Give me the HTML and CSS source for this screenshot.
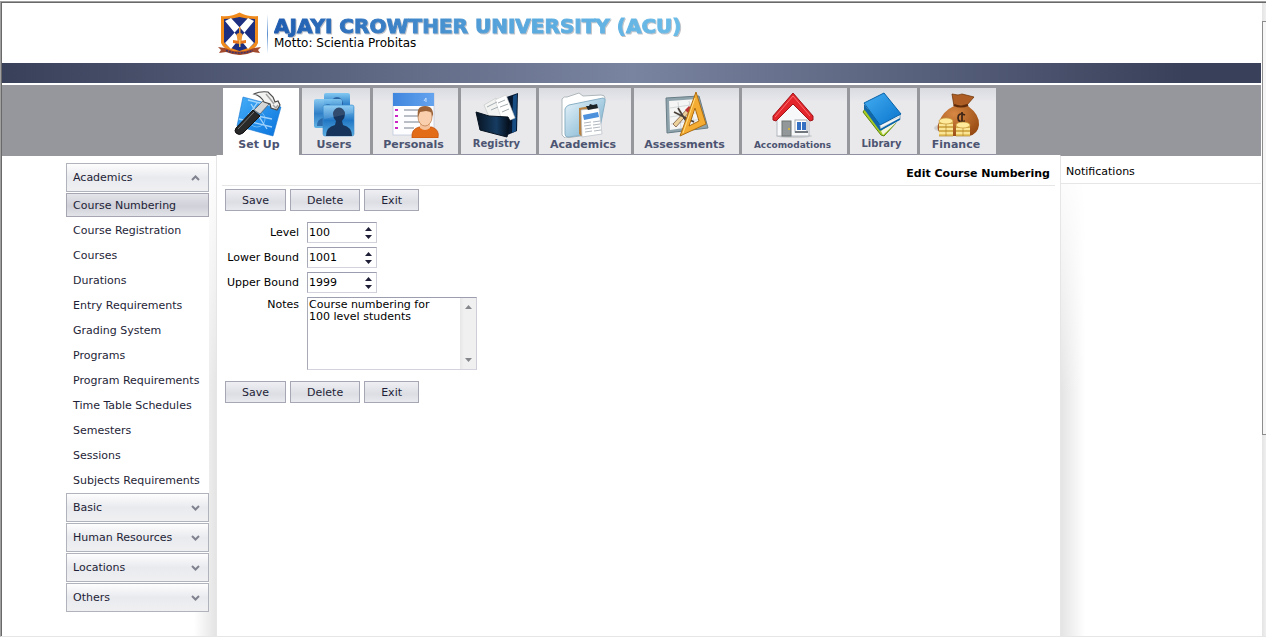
FILE: index.html
```html
<!DOCTYPE html>
<html lang="en">
<head>
<meta charset="utf-8">
<title>Edit Course Numbering</title>
<link rel="stylesheet" href="styles.css">
</head>
<body>
<div class="frame">
<div class="page">
  <header class="brand">
    <svg class="crest" viewBox="0 0 45 44" aria-hidden="true">
      <path d="M4 4 Q15 5 22.500 0.500 Q30 5 41 4 V31 Q39 38 22.500 43 Q6 38 4 31Z" fill="#f08a1c"/>
      <path d="M7 7 Q16 7 22.500 5 Q29 7 38 7 V30 Q36 35 22.500 39 Q9 35 7 30Z" fill="#1c2f80"/>
      <path d="M8 9 L14 6 L37 31 L31 37Z M37 9 L31 6 L8 31 L14 37Z" fill="#fff"/>
      <path d="M22 15h1.500v6l2 1-1 7h-4l-1-7 2.500-1Z" fill="#f19a35"/>
      <path d="M16 28l6.500 1 6.500-1v3l-6.500 1-6.500-1Z" fill="#e8751a"/>
      <path d="M22 28v7h1.500v-7Z" fill="#f7c25a"/>
      <path d="M1 35l7 1q14 7 29 0l7-1-3 3 2 3-7-1q-13 6-27 0l-7 1 2-3Z" fill="#a34a2c"/>
      <path d="M9 38.500q13 5 27 0" fill="none" stroke="#3d3468" stroke-width="1.500" stroke-dasharray="2 1"/>
    </svg>
    <span class="rule"></span>
    <div>
      <div class="name">AJAYI CROWTHER UNIVERSITY (ACU)</div>
      <div class="motto">Motto: Scientia Probitas</div>
    </div>
  </header>
  <div class="band"></div>
  <nav class="tabs" aria-label="Modules">
    <a href="#" class="tab setup active">
      <svg viewBox="0 0 60 48" aria-hidden="true">
        <defs><linearGradient id="bl" x1="0" y1="0" x2="1" y2="1"><stop offset="0" stop-color="#45aef8"/><stop offset="1" stop-color="#0872dc"/></linearGradient></defs>
        <path d="M14 7 L52 17 L44 46 L8 36Z" fill="url(#bl)" stroke="#1577d2" stroke-width=".6"/>
        <path d="M14 34L28 13M22 14l16 25M10 29l33 8M19 24l24 5M19 10l28 7" stroke="#bfe4ff" stroke-width="1.300" fill="none" opacity=".8"/>
        <circle cx="28" cy="29" r="8" fill="none" stroke="#9bd3fc" opacity=".6"/>
        <path d="M7 38 L24 20 L31 26 L14 43 Q10 46 7 43 Q5 41 7 38Z" fill="#292929" stroke="#111"/>
        <path d="M9 39L25 22" stroke="#777"/>
        <path d="M25 20 L35 10 L40 14 L31 24Z" fill="#d4d5d4" stroke="#555" stroke-width=".7"/>
        <path d="M25 4 Q31 1 39 2 L44 7 L46 12 L49 11 L51 15 L48 20 L42 18 L41 14 L35 12 Q32 6 25 4Z" fill="#f3f3f1" stroke="#4c4c4c" stroke-width="1.200"/>
        <path d="M37 4l5 6 3 4M44 15l3 3 2-3" stroke="#a4a4a4" fill="none" stroke-width="1.500"/>
      </svg><span>Set Up</span></a>
    <a href="#" class="tab users">
      <svg viewBox="0 0 60 48" aria-hidden="true">
        <defs><linearGradient id="us" x1="0" y1="0" x2="0" y2="1"><stop offset="0" stop-color="#82c8f2"/><stop offset=".5" stop-color="#2277c4"/><stop offset="1" stop-color="#5bb0e4"/></linearGradient></defs>
        <rect x="20" y="3" width="26" height="26" rx="2" fill="url(#us)"/><path d="M27 28V14a6 7 0 0 1 12 0v14Z" fill="#1c4f8f" opacity=".75"/>
        <rect x="10" y="9" width="28" height="29" rx="2" fill="url(#us)" opacity=".93"/><path d="M13 36q0-7 6-8v-8a5 6 0 0 1 10 0v8q6 1 6 8Z" fill="#205b9c" opacity=".75"/>
        <rect x="19" y="15" width="31" height="31" rx="2" fill="url(#us)" stroke="#3c8cc9" stroke-width=".6"/>
        <path d="M22 46q0-9 9-11l1-4q-3-3-3-7a6 6.500 0 0 1 12 0q0 4-3 7l1 4q9 2 9 11Z" fill="#16345c"/>
        <path d="M20 16h29v7L20 29Z" fill="#fff" opacity=".12"/>
      </svg><span>Users</span></a>
    <a href="#" class="tab personals">
      <svg viewBox="0 0 60 48" aria-hidden="true">
        <defs><linearGradient id="pb" x1="0" y1="0" x2="1" y2="0"><stop offset="0" stop-color="#3f86de"/><stop offset="1" stop-color="#65a3ee"/></linearGradient></defs>
        <rect x="9" y="3" width="41" height="42" fill="#fdfdff" stroke="#b9c4d8" stroke-width=".7"/>
        <rect x="9" y="3" width="41" height="13" fill="url(#pb)"/><path d="M40 11l2-3v4" stroke="#c6e0ff" fill="none"/>
        <path d="M11 20h3M11 26h3M11 32h3M11 38h3" stroke="#cb26c5" stroke-width="2"/>
        <path d="M20 20h17M20 26h15M20 32h16M20 38h10" stroke="#777f8c"/>
        <path d="M28 48q-1-9 7-11h13q8 3 6 11Z" fill="#e36c18" stroke="#bd4b08" stroke-width=".7"/>
        <path d="M36 33h10v5q-5 4-10 0Z" fill="#f6c29c"/>
        <ellipse cx="41" cy="27" rx="7" ry="9" fill="#f9cfad" stroke="#b87848" stroke-width=".7"/>
        <path d="M34 27q-2-11 7-11 9 0 8 11l-2-5-5-1-6 1Z" fill="#9b6238"/>
      </svg><span>Personals</span></a>
    <a href="#" class="tab low registry">
      <svg viewBox="0 0 60 48" aria-hidden="true">
        <defs><linearGradient id="rg" x1="0" y1="0" x2="1" y2="0"><stop offset="0" stop-color="#071321"/><stop offset=".6" stop-color="#163c61"/><stop offset="1" stop-color="#040b16"/></linearGradient></defs>
        <path d="M34 9 L51 3 L50 41 L38 46Z" fill="#06172e"/><path d="M46 6l4-2-1 37-4 2Z" fill="#174d83"/>
        <path d="M17 15l12-7 12 17-16 9Z" fill="#f3f4f2" stroke="#c4c8c8" stroke-width=".7"/>
        <path d="M28 10l11-5 9 23-12 5Z" fill="#fff" stroke="#ccc" stroke-width=".6"/>
        <path d="M20 17l10-5M31 13l7-3M33 17l8-3M24 20l7-3M35 22l7-3" stroke="#a4acb0"/>
        <path d="M9 22 L22 26 L41 27 L43 31 L40 47 L13 40Z" fill="url(#rg)" stroke="#071321"/>
      </svg><span>Registry</span></a>
    <a href="#" class="tab academics">
      <svg viewBox="0 0 60 48" aria-hidden="true">
        <defs><linearGradient id="ac" x1="0" y1="0" x2="1" y2="1"><stop offset="0" stop-color="#e9f5fb"/><stop offset="1" stop-color="#6faacb"/></linearGradient></defs>
        <path d="M9 9q2-3 5-2l12-4 4 3 18-1q4 0 4 3L43 44 12 48 9 45Z" fill="#fff" stroke="#aeb7bb"/>
        <path d="M12 19q1-3 4-4l34-7q3 0 2 4L46 43 15 47q-3 0-3-3Z" fill="url(#ac)" stroke="#8ab0c5"/>
        <path d="M26 18l17-3 5 26-20 5-2-2Z" fill="#b88242"/>
        <path d="M28 20l18-2 3 26-20 3Z" fill="#fff" stroke="#b6bdc4" stroke-width=".7"/>
        <path d="M33 16l2 4 10-2-1-4-4 1-3-1-1 2Z" fill="#1d2428"/>
        <path d="M30 25l15-3 1 5-15 3Z" fill="#4d91dc"/>
        <path d="M31 33l7-1M40 32l7-1M31 36l7-1M40 35l7-1M32 39l7-1M40 38l7-1M32 42l7-1M41 41l7-1" stroke="#b2b8c0"/>
      </svg><span>Academics</span></a>
    <a href="#" class="tab assessments">
      <svg viewBox="0 0 60 48" aria-hidden="true">
        <path d="M11 8 L44 6 L53 38 L12 43Z" fill="#8fa3ac" stroke="#687d87"/>
        <path d="M14 11 L42 9 L49 35 L15 40Z" fill="#f4f5f4"/>
        <path d="M15 18l27-4M15 27l31-5M16 34l31-5M23 12l3 26M34 11l6 26" stroke="#bcc2c5" stroke-width=".6"/>
        <path d="M18 34l16-17 2 3-15 17Z" fill="#ecd19b" stroke="#6f4935" stroke-width=".7"/>
        <path d="M19 22l20 10M23 18l11 18" stroke="#494039" stroke-width="1.700"/><path d="M30 20l4-4 3 3-4 4Z" fill="#bd3535"/>
        <path d="M41 2 L51 34 L25 46Z M40 18 L34 36 L44 31Z" fill="#f4ad32" stroke="#af6d11" fill-rule="evenodd"/>
        <path d="M40 8 L28 43" stroke="#ffdc83"/>
      </svg><span>Assessments</span></a>
    <a href="#" class="tab accomodations">
      <svg viewBox="0 0 60 48" aria-hidden="true">
        <ellipse cx="31" cy="46" rx="18" ry="2" fill="#b8babd" opacity=".6"/>
        <path d="M14 23 L30 8 L46 23 V46 L14 46Z" fill="#f7f8fa" stroke="#b4b8bf"/>
        <path d="M10 26 L30 3 L50 26 V30 L47 31 L30 14 L13 31 L10 30Z" fill="#e3262b" stroke="#9f151a" stroke-linejoin="round"/>
        <path d="M12 27L30 6l17 20" fill="none" stroke="#fa6d70"/>
        <rect x="19" y="31" width="9" height="15" fill="#929899" stroke="#6d7272"/><circle cx="26" cy="39" r="1" fill="#e5bc2b"/>
        <rect x="32" y="30" width="12" height="12" fill="#fff" stroke="#a5aab1"/>
        <path d="M34 32h4v8h-4ZM39 32h4v8h-4Z" fill="#356fc2"/><path d="M32 42h13" stroke="#72777e" stroke-width="2"/>
      </svg><span>Accomodations</span></a>
    <a href="#" class="tab low library">
      <svg viewBox="0 0 60 48" aria-hidden="true">
        <defs><linearGradient id="lb" x1="0" y1="0" x2="1" y2="1"><stop offset="0" stop-color="#45adf2"/><stop offset="1" stop-color="#0874cc"/></linearGradient></defs>
        <path d="M11 22l2-3 30 9 1 5-12 13-3-1Z" fill="#a7cb22" stroke="#5e850e"/>
        <path d="M29 41l16-12v3L31 45Z" fill="#f2f5dc"/>
        <path d="M12 14l16 20v7L12 19Z" fill="#1266aa"/>
        <path d="M27 33L48 24v5L29 40Z" fill="#f5f7f8" stroke="#477eaa" stroke-width=".7"/>
        <path d="M28 35l19-8M28 38l19-9" stroke="#b6c1ca" stroke-width=".6"/>
        <path d="M12 13 L32 3 L49 24 L28 35Z" fill="url(#lb)" stroke="#0863a9"/>
        <path d="M28 40l20-11" stroke="#0863a9" stroke-width="1.500"/>
      </svg><span>Library</span></a>
    <a href="#" class="tab finance">
      <svg viewBox="0 0 60 48" aria-hidden="true">
        <defs><radialGradient id="fn" cx=".4" cy=".3" r=".8"><stop offset="0" stop-color="#d78844"/><stop offset="1" stop-color="#93460f"/></radialGradient></defs>
        <ellipse cx="20" cy="38" rx="12" ry="4" fill="#bdbdbf" opacity=".6"/>
        <path d="M26 4q7 2 10 0l12 3-7 8-13 1Z" fill="#ae5e24" stroke="#743609" stroke-width=".8"/>
        <path d="M28 16q7-3 14 0 12 9 11 19-1 9-10 11H21Q8 43 13 32q4-11 15-16Z" fill="url(#fn)"/>
        <path d="M28 15q7 3 14 0" stroke="#5f2b0b" stroke-width="2" fill="none"/>
        <path d="M39 25q-7-3-7 3 0 5 7 3M36 22v11" fill="none" stroke="#3c2416" stroke-width="1.700"/>
        <path d="M13 31h14v15H13ZM30 35h14v11H30Z" fill="#e8c660"/>
        <path d="M13 35h14M13 39h14M13 43h14M30 39h14M30 43h14" stroke="#fff0a8" stroke-width="1.500"/>
        <path d="M13 33h14M13 37h14M13 41h14M13 46h14M30 37h14M30 41h14M30 46h14M20 33v13M37 37v9" stroke="#b3852b" stroke-width=".7"/>
        <ellipse cx="20" cy="31" rx="7" ry="3" fill="#ffe99a" stroke="#c89a39" stroke-width=".7"/><ellipse cx="37" cy="35" rx="7" ry="3" fill="#ffe99a" stroke="#c89a39" stroke-width=".7"/>
      </svg><span>Finance</span></a>
  </nav>
  <div class="columns">
    <aside class="side">
      <div class="menu">
        <button class="group" type="button">Academics<svg viewBox="0 0 9 6" aria-hidden="true"><path d="M1 5L4.500 1.500 8 5" /></svg></button>
        <a class="item current" href="#">Course Numbering</a>
        <a class="item" href="#">Course Registration</a>
        <a class="item" href="#">Courses</a>
        <a class="item" href="#">Durations</a>
        <a class="item" href="#">Entry Requirements</a>
        <a class="item" href="#">Grading System</a>
        <a class="item" href="#">Programs</a>
        <a class="item" href="#">Program Requirements</a>
        <a class="item" href="#">Time Table Schedules</a>
        <a class="item" href="#">Semesters</a>
        <a class="item" href="#">Sessions</a>
        <a class="item" href="#">Subjects Requirements</a>
        <button class="group" type="button">Basic<svg viewBox="0 0 9 6" aria-hidden="true"><path d="M1 1L4.500 4.500 8 1"/></svg></button>
        <button class="group" type="button">Human Resources<svg viewBox="0 0 9 6" aria-hidden="true"><path d="M1 1L4.500 4.500 8 1"/></svg></button>
        <button class="group" type="button">Locations<svg viewBox="0 0 9 6" aria-hidden="true"><path d="M1 1L4.500 4.500 8 1"/></svg></button>
        <button class="group" type="button">Others<svg viewBox="0 0 9 6" aria-hidden="true"><path d="M1 1L4.500 4.500 8 1"/></svg></button>
      </div>
    </aside>
    <main class="main">
      <h1 class="title">Edit Course Numbering</h1>
      <form class="form">
        <div class="actions"><button type="button" class="btn">Save</button><button type="button" class="btn">Delete</button><button type="button" class="btn">Exit</button></div>
        <div class="fields">
          <label for="level">Level</label>
          <div class="spin"><input id="level" type="text" inputmode="numeric" value="100"><div class="steps"><button type="button" aria-label="Increase level"><svg viewBox="0 0 7 4"><path d="M0 4L3.500 0 7 4Z"/></svg></button><button type="button" aria-label="Decrease level"><svg viewBox="0 0 7 4"><path d="M0 0L3.500 4 7 0Z"/></svg></button></div></div>
          <label for="lower">Lower Bound</label>
          <div class="spin"><input id="lower" type="text" inputmode="numeric" value="1001"><div class="steps"><button type="button" aria-label="Increase lower bound"><svg viewBox="0 0 7 4"><path d="M0 4L3.500 0 7 4Z"/></svg></button><button type="button" aria-label="Decrease lower bound"><svg viewBox="0 0 7 4"><path d="M0 0L3.500 4 7 0Z"/></svg></button></div></div>
          <label for="upper">Upper Bound</label>
          <div class="spin"><input id="upper" type="text" inputmode="numeric" value="1999"><div class="steps"><button type="button" aria-label="Increase upper bound"><svg viewBox="0 0 7 4"><path d="M0 4L3.500 0 7 4Z"/></svg></button><button type="button" aria-label="Decrease upper bound"><svg viewBox="0 0 7 4"><path d="M0 0L3.500 4 7 0Z"/></svg></button></div></div>
          <label for="notes">Notes</label>
          <div class="notes"><textarea id="notes">Course numbering for
100 level students</textarea><div class="track"><svg viewBox="0 0 7 4"><path d="M0 4L3.500 0 7 4Z"/></svg><svg viewBox="0 0 7 4"><path d="M0 0L3.500 4 7 0Z"/></svg></div></div>
        </div>
        <div class="actions"><button type="button" class="btn">Save</button><button type="button" class="btn">Delete</button><button type="button" class="btn">Exit</button></div>
      </form>
    </main>
    <aside class="notices"><h2>Notifications</h2></aside>
  </div>
</div>
<div class="scroller"><div class="thumb"></div></div>
</div>
</body>
</html>
```
FILE: styles.css
```css
* { box-sizing: border-box; }
body {
  margin: 0;
  background: #fff;
  color: #000;
  font-family: "DejaVu Sans", Verdana, sans-serif;
  font-size: 11px;
}
button, input, textarea { font: inherit; color: inherit; margin: 0; }
a { color: inherit; text-decoration: none; }
.frame {
  display: flex;
  min-height: calc(100vh - 2px);
  margin-top: 1px;
  border-top: 1px solid #a0a0a0;
  border-left: 1px solid #a0a0a0;
  border-bottom: 1px solid #e6e6e6;
}
.page {
  flex: 1;
  display: flex;
  flex-direction: column;
  border-top: 1px solid #696969;
  border-left: 1px solid #696969;
}

.brand { display: flex; height: 60px; padding: 9px 0 0 215px; }
.crest { width: 45px; height: 44px; }
.rule {
  width: 1px;
  height: 40px;
  margin: 2px 6px 0 5px;
  background: linear-gradient(#fff, #5b8fd0, #fff);
}
.name {
  margin-top: 3px;
  font-size: 20px;
  font-weight: bold;
  line-height: 22px;
  color: transparent;
  -webkit-text-stroke: 1px transparent;
  background: linear-gradient(90deg, #1f5cb0, #5aa9de 60%, #6cbce8);
  -webkit-background-clip: text;
  background-clip: text;
  filter: drop-shadow(1px 1px 0 #c4c4c8);
}
.motto { font-size: 12px; line-height: 12px; }
.band {
  height: 20px;
  background: linear-gradient(90deg, #39405a, #7984a0 50%, #39405a 94%);
}

.tabs {
  display: flex;
  gap: 3px;
  margin-top: 2px;
  padding: 3px 0 0 221px;
  background: #96979c;
}
.tab {
  display: flex;
  flex-direction: column;
  align-items: center;
  height: 67px;
  padding: 2px 4px 0 0;
  border-bottom: 1px solid #8f91a2;
  background: linear-gradient(#d9dbe1, #e9e9ec 14px);
  color: #4c5471;
  font-weight: bold;
  line-height: 14px;
}
.tab.active { background: #fff; border-color: #fff; }
.tab.low { line-height: 11px; }
.tab svg { width: 60px; height: 48px; }
.setup, .finance { width: 76px; }
.users { width: 68px; }
.personals { width: 85px; }
.registry { width: 75px; }
.academics { width: 92px; }
.assessments, .accomodations { width: 105px; }
.library { width: 67px; }
.registry, .library { font-size: 10px; }
.accomodations { font-size: 9px; }

.columns { flex: 1; display: flex; }
.side {
  width: 215px;
  padding: 7px 8px 0 64px;
  border-top: 1px solid #96979c;
  border-right: 1px solid #e6e6e6;
  background:
    linear-gradient(#fff, rgba(255, 255, 255, 0) 240px),
    linear-gradient(to left, #e4e4e4, #fff 22px);
}
.menu {
  display: flex;
  flex-direction: column;
  gap: 1px;
  width: 143px;
  background: #fff;
  color: #1e1e37;
}
.group {
  display: flex;
  align-items: center;
  justify-content: space-between;
  height: 29px;
  padding: 0 8px 0 6px;
  border: 1px solid #b0b2bc;
  background: linear-gradient(#fdfdfe, #e9eaee 50%, #f0f0f2);
  text-align: left;
}
.group svg { width: 9px; height: 6px; fill: none; stroke: #80828f; stroke-width: 2; }
.item {
  height: 24px;
  padding-left: 6px;
  border: 1px solid #fff;
  line-height: 23px;
  white-space: nowrap;
}
.current {
  border-color: #a5a6b2;
  background: linear-gradient(#e4e5ea, #cfd0d8 55%, #e3e4e9);
}

.main { flex: 1; padding: 0 5px; background: #fff; }
.title {
  margin: 0;
  padding: 6px 5px 0 0;
  height: 31px;
  border-bottom: 1px solid #e6e6e6;
  font-size: 11px;
  line-height: 25px;
  text-align: right;
}
.form { padding: 3px; }
.actions { display: flex; gap: 4px; }
.btn {
  height: 22px;
  padding: 1px 16px 0;
  border: 1px solid #a5a7b4;
  background: linear-gradient(#efeff3, #dcdee4 60%, #e9eaee);
  color: #1e1e37;
  line-height: 20px;
}
.fields {
  display: grid;
  grid-template-columns: 74px auto;
  justify-content: start;
  gap: 4px 8px;
  margin: 11px 0;
  text-align: right;
  line-height: 21px;
  white-space: nowrap;
}
.fields label[for="notes"] { line-height: 15px; }
.spin, .notes {
  display: flex;
  border: 1px solid;
  border-color: #9c9daf #cdced8 #d2d3dc #a9aab8;
  background: #fff;
}
.spin { width: 70px; height: 21px; }
.spin input, .notes textarea {
  flex: 1;
  min-width: 0;
  padding: 0 1px;
  border: 0;
  background: none;
  outline: 0;
}
.steps { display: flex; flex-direction: column; justify-content: center; gap: 4px; width: 15px; }
.steps button { display: flex; height: 4px; padding: 0 4px; border: 0; background: none; }
.steps svg { width: 7px; height: 4px; fill: #1e1e37; }
.notes { width: 170px; height: 73px; }
.notes textarea { resize: none; overflow: hidden; line-height: 12px; padding-top: 1px; }
.track {
  display: flex;
  flex-direction: column;
  align-items: center;
  justify-content: space-between;
  width: 16px;
  padding: 7px 0;
  background: linear-gradient(90deg, #e6e6e6, #f0f0f0 4px);
}
.track svg { width: 7px; height: 4px; fill: #85878c; }

.notices {
  width: 201px;
  border-top: 1px solid #96979c;
  border-left: 1px solid #e6e6e6;
  background:
    linear-gradient(#fff, rgba(255, 255, 255, 0) 240px),
    linear-gradient(to right, #e4e4e4, #fff 24px);
}
.notices h2 {
  margin: 0;
  padding: 3px 5px 0;
  height: 28px;
  border-bottom: 1px solid #e6e6e6;
  background: #fff;
  font-size: 11px;
  font-weight: normal;
  line-height: 25px;
}

.scroller {
  width: 5px;
  padding: 18px 0 0 1px;
  border-top: 1px solid #696969;
  background: linear-gradient(90deg, #fff 1px, #e4e4e4 1px, #efefef);
}
.thumb {
  height: 414px;
  border: 1px solid #8c8c8c;
  border-right: 0;
  background: #f6f6f6;
}
```
